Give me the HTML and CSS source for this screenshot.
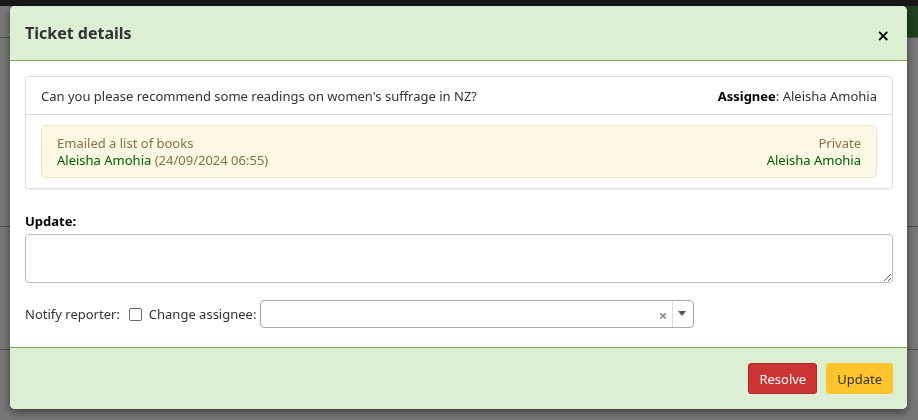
FILE: index.html
```html
<!DOCTYPE html>
<html lang="en">
<head>
  <meta charset="UTF-8" />
  <title>Ticket details</title>
  <link rel="stylesheet" href="styles.css">
</head>
<body>

  <!-- page behind the modal -->
  <div class="page">
    <div class="topbar"></div>
    <div class="page-search">Se</div>
    <div class="page-line line-1"></div>
    <div class="page-line line-2"></div>
    <div class="page-line line-3"></div>
  </div>
  <div class="backdrop"></div>

  <!-- modal -->
  <div class="modal">
    <div class="modal-header">
      <h1 class="modal-title">Ticket details</h1>
      <button class="close" type="button">&times;</button>
    </div>

    <div class="modal-body">
      <div class="ticket-card">
        <div class="ticket-head">
          <span>Can you please recommend some readings on women's suffrage in NZ?</span>
          <span><strong>Assignee</strong>: Aleisha Amohia</span>
        </div>
        <div class="ticket-updates">
          <div class="update-item">
            <div class="update-left">
              <div>Emailed a list of books</div>
              <div><span class="user">Aleisha Amohia</span> (24/09/2024 06:55)</div>
            </div>
            <div class="update-right">
              <div>Private</div>
              <div class="user">Aleisha Amohia</div>
            </div>
          </div>
        </div>
      </div>

      <label class="update-label" for="update_message">Update:</label>
      <textarea id="update_message" class="update-text"></textarea>

      <div class="options-row">
        <label for="notify">Notify reporter:</label>
        <input type="checkbox" id="notify" />
        <label for="assignee">Change assignee:</label>
        <div class="select2" id="assignee">
          <span class="select2-rendered"></span>
          <span class="select2-clear">&times;</span>
          <span class="select2-arrow"></span>
        </div>
      </div>
    </div>

    <div class="modal-footer">
      <button class="btn btn-resolve" type="button">Resolve</button>
      <button class="btn btn-update" type="button">Update</button>
    </div>
  </div>

</body>
</html>
```

FILE: styles.css
```css
body {
  margin: 0;
  font-family: "Noto Sans", "Open Sans", sans-serif;
  font-size: 13px;
  color: #333;
  background-color: #eee;
  height: 420px;
  overflow: hidden;
}

/* page behind */
.page {
  position: relative;
  height: 420px;
}

.topbar {
  height: 6px;
  background-color: #303030;
}

.page-search {
  position: absolute;
  right: 0;
  top: 6px;
  width: 30px;
  height: 32px;
  background-color: #408540;
  color: #aaa;
  font-size: 16px;
  line-height: 30px;
  padding-left: 4px;
}

.page-line {
  position: absolute;
  left: 0;
  right: 0;
  border-top: 1px solid #999;
}
.line-1 { top: 37px; }
.line-2 { top: 226px; }
.line-3 { top: 349px; }

.backdrop {
  position: fixed;
  inset: 0;
  background-color: rgba(0, 0, 0, 0.5);
}

/* modal */
.modal {
  position: fixed;
  left: 10px;
  top: 6px;
  width: 897px;
  background-color: #fff;
  border-radius: 5px;
  box-shadow: 0 3px 9px rgba(0, 0, 0, 0.5);
  overflow: hidden;
}

.modal-header {
  display: flex;
  align-items: center;
  justify-content: space-between;
  height: 54px;
  padding: 0 15px;
  background-color: #dcefd3;
  border-bottom: 1px solid #7aaa55;
}

.modal-title {
  margin: 0;
  font-size: 16px;
  font-weight: bold;
  color: #333;
}

.close {
  border: none;
  background: none;
  padding: 0;
  margin-top: 6px;
  margin-right: 2px;
  font-family: "DejaVu Sans", sans-serif;
  font-size: 16px;
  font-weight: bold;
  color: #000;
  line-height: 1;
}

.modal-body {
  padding: 15px 14px 19px 15px;
}

.ticket-card {
  border: 1px solid #ddd;
  border-radius: 4px;
  box-shadow: 0 1px 1px rgba(0, 0, 0, 0.05);
}

.ticket-head {
  display: flex;
  justify-content: space-between;
  padding: 10px 15px 9px;
  line-height: 18px;
  border-bottom: 1px solid #ddd;
  color: #333;
}

.ticket-head strong {
  color: #000;
}

.ticket-updates {
  padding: 10px 15px;
}

.update-item {
  display: flex;
  justify-content: space-between;
  padding: 9px 15px 8px;
  line-height: 17px;
  background-color: #fcf8e3;
  border: 1px solid #efe5c9;
  border-radius: 4px;
  color: #8a7246;
}

.update-right {
  text-align: right;
}

.user {
  color: #006100;
}

.update-label {
  display: block;
  margin-top: 23px;
  font-weight: bold;
  color: #000;
  line-height: 18px;
}

.update-text {
  display: block;
  box-sizing: border-box;
  width: 100%;
  height: 49px;
  margin-top: 4px;
  border: 1px solid #bbb;
  border-radius: 4px;
  font-family: inherit;
}

.options-row {
  display: flex;
  align-items: center;
  gap: 6px;
  margin-top: 17px;
}

.options-row input[type="checkbox"] {
  appearance: none;
  width: 13px;
  height: 13px;
  margin: 0 1px 0 3px;
  border: 1px solid #6a6a7a;
  border-radius: 2px;
  background: #fff;
}

.select2 {
  position: relative;
  box-sizing: border-box;
  width: 434px;
  height: 28px;
  margin-left: -2px;
  border: 1px solid #aaa;
  border-radius: 4px;
}

.select2-clear {
  position: absolute;
  right: 26px;
  top: 5px;
  font-size: 15px;
  font-weight: bold;
  color: #888;
  line-height: 18px;
}

.select2-arrow {
  position: absolute;
  right: 0;
  top: 0;
  width: 20px;
  height: 26px;
  border-left: 1px solid #ddd;
}

.select2-arrow::after {
  content: "";
  position: absolute;
  left: 5px;
  top: 10px;
  border-left: 4px solid transparent;
  border-right: 4px solid transparent;
  border-top: 5px solid #555;
}

.modal-footer {
  display: flex;
  justify-content: flex-end;
  gap: 9px;
  padding: 15px 14px 15px;
  background-color: #dcefd3;
  border-top: 1px solid #7aaa55;
}

.btn {
  height: 31px;
  padding: 0 10px;
  border: 1px solid transparent;
  border-radius: 3px;
  font-family: inherit;
  font-size: 13px;
}

.btn-resolve {
  background-color: #cc3333;
  border-color: #a92a2a;
  color: #fff;
}

.btn-update {
  background-color: #ffc32b;
  border-color: #ffc32b;
  color: #333;
}
```
